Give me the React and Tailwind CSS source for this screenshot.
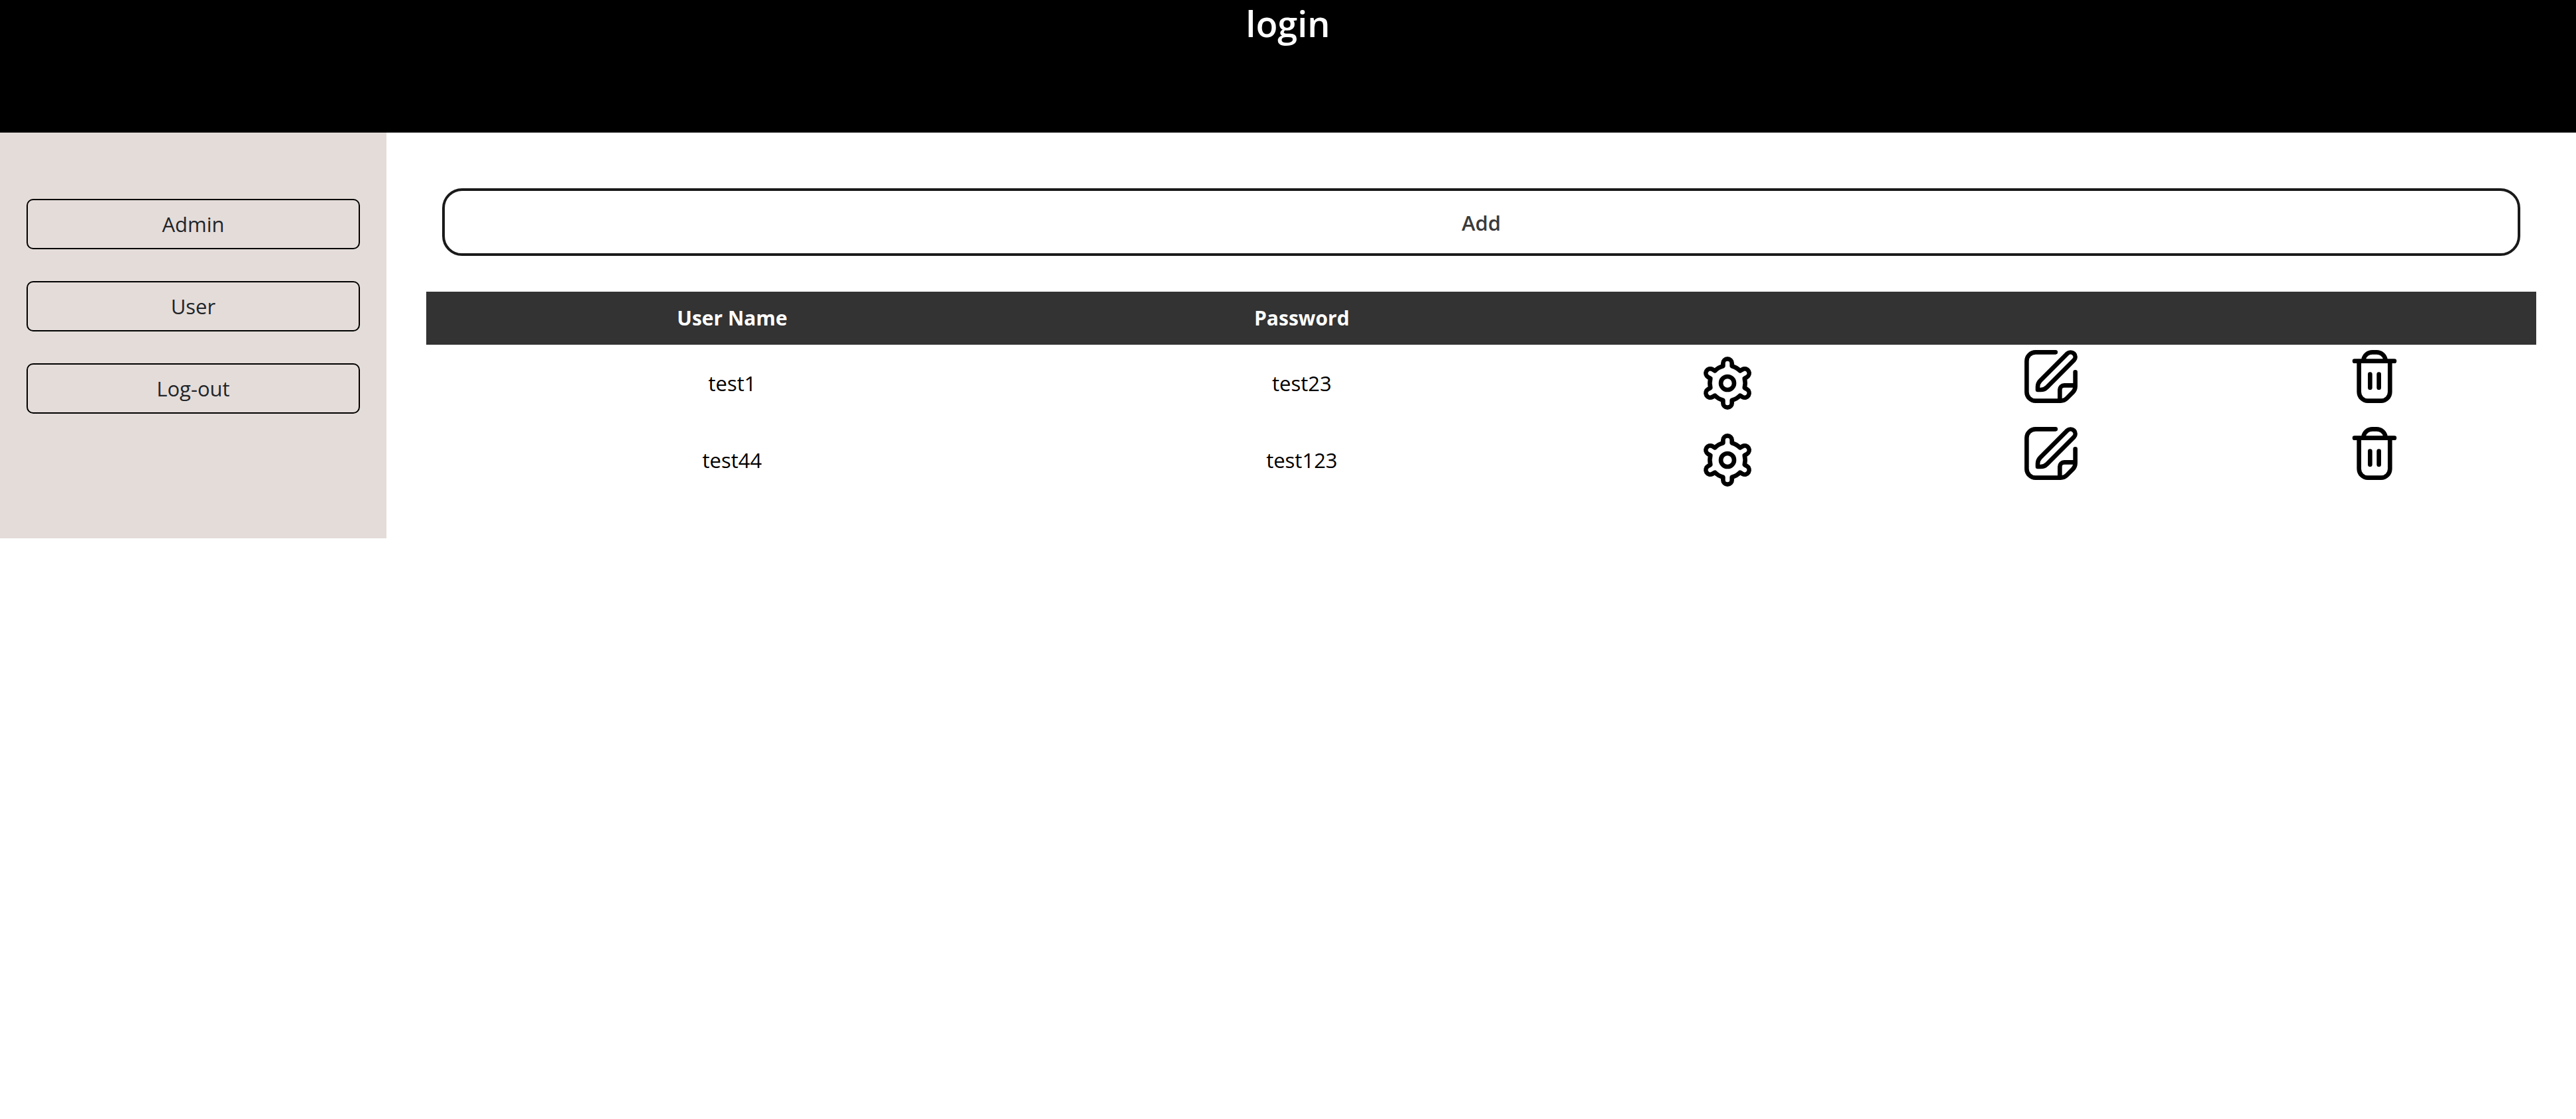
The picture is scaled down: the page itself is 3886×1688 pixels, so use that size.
const users = [
  { name: "test1", password: "test23" },
  { name: "test44", password: "test123" },
];

const navItems = ["Admin", "User", "Log-out"];

function Icon({ children }) {
  return (
    <svg viewBox="0 0 24 24" className="block size-20" fill="currentColor" aria-hidden="true">
      {children}
    </svg>
  );
}

function SettingsIcon() {
  return (
    <Icon>
      <path d="M12,8a4,4,0,1,0,4,4A4,4,0,0,0,12,8Zm0,6a2,2,0,1,1,2-2A2,2,0,0,1,12,14Z" />
      <path d="M21.294,13.9l-.444-.256a9.1,9.1,0,0,0,0-3.29l.444-.256a3,3,0,1,0-3-5.2l-.445.257A8.977,8.977,0,0,0,15,3.513V3A3,3,0,0,0,9,3v.513A8.977,8.977,0,0,0,6.152,5.159L5.705,4.9a3,3,0,0,0-3,5.2l.444.256a9.1,9.1,0,0,0,0,3.29l-.444.256a3,3,0,1,0,3,5.2l.445-.257A8.977,8.977,0,0,0,9,20.487V21a3,3,0,0,0,6,0v-.513a8.977,8.977,0,0,0,2.848-1.646l.447.258a3,3,0,0,0,3-5.2Zm-2.548-3.776a7.048,7.048,0,0,1,0,3.75,1,1,0,0,0,.464,1.133l1.084.626a1,1,0,0,1-1,1.733l-1.086-.628a1,1,0,0,0-1.215.165,6.984,6.984,0,0,1-3.243,1.875,1,1,0,0,0-.751.969V21a1,1,0,0,1-2,0V19.748a1,1,0,0,0-.751-.969A6.984,6.984,0,0,1,7.006,16.9a1,1,0,0,0-1.215-.165l-1.084.627a1,1,0,1,1-1-1.732l1.084-.626a1,1,0,0,0,.464-1.133,7.048,7.048,0,0,1,0-3.75A1,1,0,0,0,4.79,8.992L3.706,8.366a1,1,0,0,1,1-1.733l1.086.628A1,1,0,0,0,7.006,7.1a6.984,6.984,0,0,1,3.243-1.875A1,1,0,0,0,11,4.252V3a1,1,0,0,1,2,0V4.252a1,1,0,0,0,.751.969A6.984,6.984,0,0,1,16.994,7.1a1,1,0,0,0,1.215.165l1.084-.627a1,1,0,1,1,1,1.732l-1.084.626A1,1,0,0,0,18.746,10.125Z" />
    </Icon>
  );
}

function EditIcon() {
  return (
    <Icon>
      <path d="M18.656.93,6.464,13.122A4.966,4.966,0,0,0,5,16.657V18a1,1,0,0,0,1,1H7.343a4.966,4.966,0,0,0,3.535-1.464L23.07,5.344a3.125,3.125,0,0,0,0-4.414A3.194,3.194,0,0,0,18.656.93Zm3,3L9.464,16.122A3.02,3.02,0,0,1,7.343,17H7v-.343a3.02,3.02,0,0,1,.878-2.121L20.07,2.344a1.148,1.148,0,0,1,1.586,0A1.123,1.123,0,0,1,21.656,3.93Z" />
      <path d="M23,8.979a1,1,0,0,0-1,1V15H18a3,3,0,0,0-3,3v4H5a3,3,0,0,1-3-3V5A3,3,0,0,1,5,2h9.042a1,1,0,0,0,0-2H5A5.006,5.006,0,0,0,0,5V19a5.006,5.006,0,0,0,5,5H16.343a4.968,4.968,0,0,0,3.536-1.464l2.656-2.658A4.968,4.968,0,0,0,24,16.343V9.979A1,1,0,0,0,23,8.979ZM18.465,21.122a2.975,2.975,0,0,1-1.465.8V18a1,1,0,0,1,1-1h3.925a3.016,3.016,0,0,1-.8,1.464Z" />
    </Icon>
  );
}

function TrashIcon() {
  return (
    <Icon>
      <path d="M21,4H17.9A5.009,5.009,0,0,0,13,0H11A5.009,5.009,0,0,0,6.1,4H3A1,1,0,0,0,3,6H4V19a5.006,5.006,0,0,0,5,5h6a5.006,5.006,0,0,0,5-5V6h1a1,1,0,0,0,0-2ZM11,2h2a3.006,3.006,0,0,1,2.829,2H8.171A3.006,3.006,0,0,1,11,2Zm7,17a3,3,0,0,1-3,3H9a3,3,0,0,1-3-3V6H18Z" />
      <path d="M10,18a1,1,0,0,0,1-1V11a1,1,0,0,0-2,0v6A1,1,0,0,0,10,18Z" />
      <path d="M14,18a1,1,0,0,0,1-1V11a1,1,0,0,0-2,0v6A1,1,0,0,0,14,18Z" />
    </Icon>
  );
}

function IconButton({ label, children }) {
  return (
    <button type="button" aria-label={label} className="mx-auto block cursor-pointer">
      {children}
    </button>
  );
}

export default function App() {
  return (
    <div className="min-h-screen bg-white font-['Open_Sans','Noto_Sans',sans-serif] text-[31px] leading-12 text-black">
      <header className="h-50 bg-black text-center text-white">
        <h1 className="text-[54px] leading-[70px] font-semibold">login</h1>
      </header>

      <div className="flex items-start">
        <nav className="flex w-[15%] shrink-0 flex-col gap-12 bg-[#e4dcd9] px-10 pt-25 pb-47">
          {navItems.map((item) => (
            <button
              key={item}
              type="button"
              className="cursor-pointer rounded-[10px] border-2 border-black py-3 text-[#212529]"
            >
              {item}
            </button>
          ))}
        </nav>

        <main className="min-w-0 flex-1 px-15 pt-21">
          <div className="px-6">
            <button
              type="button"
              className="w-full cursor-pointer rounded-[30px] border-4 border-[#1a1a1a] pt-6 pb-[22px] font-semibold text-[#3b3b3b]"
            >
              Add
            </button>
          </div>

          <table className="mt-[54px] w-full table-fixed border-collapse text-center">
            <thead className="bg-[#333333] text-[30px] leading-12 text-white">
              <tr>
                <th scope="col" className="w-[29%] py-4 font-bold">User Name</th>
                <th scope="col" className="w-[25%] py-4 font-bold">Password</th>
                <td />
                <td />
                <td />
              </tr>
            </thead>
            <tbody>
              {users.map((user) => (
                <tr key={user.name} className="h-29">
                  <td>{user.name}</td>
                  <td>{user.password}</td>
                  <td>
                    <IconButton label={`Settings for ${user.name}`}>
                      <SettingsIcon />
                    </IconButton>
                  </td>
                  <td className="pt-2 align-top">
                    <IconButton label={`Edit ${user.name}`}>
                      <EditIcon />
                    </IconButton>
                  </td>
                  <td className="pt-2 align-top">
                    <IconButton label={`Delete ${user.name}`}>
                      <TrashIcon />
                    </IconButton>
                  </td>
                </tr>
              ))}
            </tbody>
          </table>
        </main>
      </div>
    </div>
  );
}
